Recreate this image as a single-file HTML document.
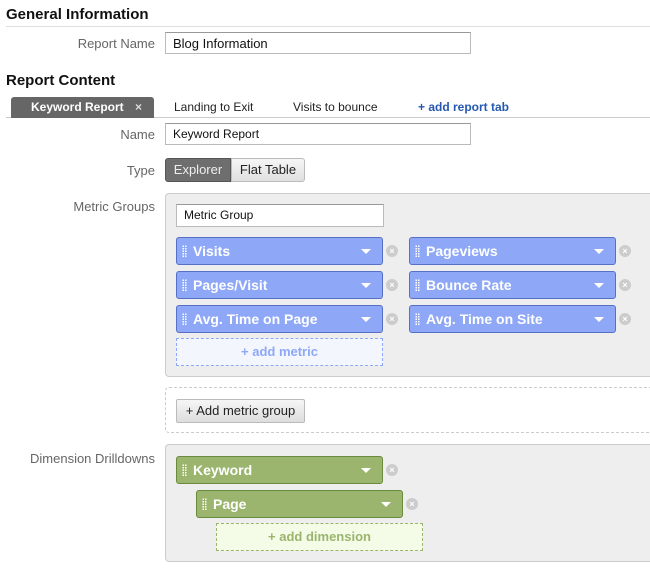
<!DOCTYPE html><html><head><style>
*{margin:0;padding:0;box-sizing:border-box}
body{width:650px;height:569px;background:#fff;font-family:"Liberation Sans",Arial,sans-serif;font-size:13px;color:#222;position:relative;overflow:hidden}
.a{position:absolute}
h2{position:absolute;font-size:15px;font-weight:bold;color:#111}
.lbl{position:absolute;right:495px;color:#666;font-size:13px;white-space:nowrap}
.inp{position:absolute;border:1px solid #bbb;border-top-color:#999;background:#fff;padding:3px 7px;font-size:13px;color:#111}
.box{position:absolute;background:#eee;border:1px solid #ccc;border-right:none;border-radius:4px 0 0 4px}
.pill{position:absolute;width:207px;height:28px;border-radius:3px;color:#fff;font-weight:bold;font-size:14px;line-height:26px;padding-left:16px}
.blue{background:#8ea8f7;border:1px solid #5670c6}
.green{background:#9bb56e;border:1px solid #6a8a3e}
.pill:before{content:"";position:absolute;left:5px;top:7px;width:5px;height:13px;background-image:radial-gradient(circle,#fff 0.8px,transparent 1px);background-size:2.5px 2.5px}
.pill:after{content:"";position:absolute;right:11px;top:11px;border-left:5px solid transparent;border-right:5px solid transparent;border-top:5px solid #fff}
.x{position:absolute;width:12px;height:12px;border-radius:50%;background:#ccc;color:#fff;font-size:9px;line-height:12px;text-align:center;font-weight:bold}
.dash{position:absolute;width:207px;height:28px;border:1px dashed;text-align:center;font-weight:bold;font-size:13px;line-height:26px}
</style></head><body>
<h2 style="left:6px;top:6px">General Information</h2>
<div class="a" style="left:6px;top:26px;width:644px;height:1px;background:#ddd"></div>
<div class="lbl" style="top:36px">Report Name</div>
<div class="inp" style="left:165px;top:32px;width:306px;height:22px;padding-top:3px">Blog Information</div>
<h2 style="left:6px;top:72px">Report Content</h2>
<div class="a" style="left:6px;top:117px;width:644px;height:1px;background:#ccc"></div>
<div class="a" style="left:11px;top:97px;width:143px;height:21px;background:#666;border-radius:3px 3px 0 0;color:#fff;font-weight:bold;font-size:12px;line-height:20px;padding-left:20px">Keyword Report <span style="margin-left:8px;color:#ddd">×</span></div>
<div class="a" style="left:174px;top:100px;font-size:12px">Landing to Exit</div>
<div class="a" style="left:293px;top:100px;font-size:12px">Visits to bounce</div>
<div class="a" style="left:418px;top:100px;font-size:12px;color:#2559b0;font-weight:bold">+ add report tab</div>
<div class="lbl" style="top:127px">Name</div>
<div class="inp" style="left:165px;top:123px;width:306px;height:22px;font-size:12px">Keyword Report</div>
<div class="lbl" style="top:163px">Type</div>
<div class="a" style="left:165px;top:158px;width:66px;height:24px;background:#6e6e6e;color:#eee;border:1px solid #555;border-radius:3px 0 0 3px;line-height:22px;text-align:center">Explorer</div>
<div class="a" style="left:231px;top:158px;width:74px;height:24px;background:linear-gradient(#f6f6f6,#e0e0e0);border:1px solid #bbb;border-radius:0 3px 3px 0;line-height:22px;text-align:center">Flat Table</div>
<div class="lbl" style="top:199px">Metric Groups</div>
<div class="box" style="left:165px;top:193px;width:485px;height:184px"></div>
<div class="inp" style="left:176px;top:204px;width:208px;height:23px;font-size:12px">Metric Group</div>
<div class="pill blue" style="left:176px;top:237px">Visits</div><div class="x" style="left:386px;top:245px">×</div>
<div class="pill blue" style="left:409px;top:237px">Pageviews</div><div class="x" style="left:619px;top:245px">×</div>
<div class="pill blue" style="left:176px;top:271px">Pages/Visit</div><div class="x" style="left:386px;top:279px">×</div>
<div class="pill blue" style="left:409px;top:271px">Bounce Rate</div><div class="x" style="left:619px;top:279px">×</div>
<div class="pill blue" style="left:176px;top:305px">Avg. Time on Page</div><div class="x" style="left:386px;top:313px">×</div>
<div class="pill blue" style="left:409px;top:305px">Avg. Time on Site</div><div class="x" style="left:619px;top:313px">×</div>
<div class="dash" style="left:176px;top:338px;background:#f4f6fe;border-color:#8ea8f7;color:#8ea8f7">+ add metric</div>
<div class="a" style="left:165px;top:387px;width:486px;height:46px;border:1px dashed #ccc;border-right:none;border-radius:4px 0 0 4px"></div>
<div class="a" style="left:176px;top:399px;width:129px;height:24px;background:linear-gradient(#f6f6f6,#ddd);border:1px solid #bbb;border-radius:2px;line-height:22px;text-align:center">+ Add metric group</div>
<div class="lbl" style="top:451px">Dimension Drilldowns</div>
<div class="box" style="left:165px;top:444px;width:485px;height:118px"></div>
<div class="pill green" style="left:176px;top:456px">Keyword</div><div class="x" style="left:386px;top:464px">×</div>
<div class="pill green" style="left:196px;top:490px">Page</div><div class="x" style="left:406px;top:498px">×</div>
<div class="dash" style="left:216px;top:523px;background:#f4fbe6;border-color:#9bb56e;color:#9bb56e">+ add dimension</div>
</body></html>
